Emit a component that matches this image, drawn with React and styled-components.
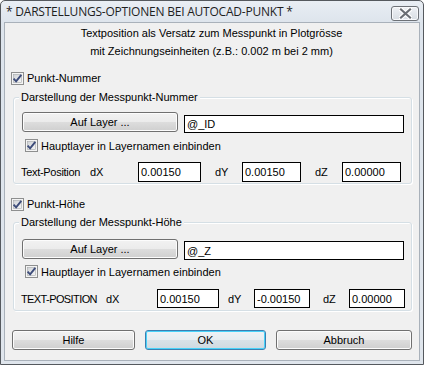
import styled, { createGlobalStyle } from 'styled-components'

const Global = createGlobalStyle`
  html, body { margin: 0; padding: 0; background: #ffffff; }
  * { box-sizing: border-box; }
`

const CheckBox = ({ checked }) => (
    <svg width="13" height="13" viewBox="0 0 13 13">
        <defs>
            <linearGradient id="cbfill" x1="0" y1="0" x2="1" y2="1">
                <stop offset="0" stopColor="#cfd2d6" />
                <stop offset="1" stopColor="#f6f6f6" />
            </linearGradient>
        </defs>
        <rect x="0.5" y="0.5" width="12" height="12" fill="#f4f4f4" stroke="#8e8f8f" />
        <rect x="2.5" y="2.5" width="8" height="8" fill="url(#cbfill)" stroke="#a5a8ab" strokeWidth="0.6" />
        {checked && <path d="M2.6 6.6 L5.1 9.3 L10.3 2.8" fill="none" stroke="#3d4c7a" strokeWidth="1.9" />}
    </svg>
)

const CloseGlyph = () => (
    <svg width="13" height="11" viewBox="0 0 13 11">
        <path d="M2 1.5 L11 9.5 M11 1.5 L2 9.5" stroke="#ffffff" strokeWidth="4.4" strokeLinecap="square" />
        <path d="M2 1.5 L11 9.5 M11 1.5 L2 9.5" stroke="#6b6f74" strokeWidth="2.2" strokeLinecap="square" />
    </svg>
)

const App = () => {
    return <Window>
        <Global />
        <TitleBar>
            <Title>* DARSTELLUNGS-OPTIONEN BEI AUTOCAD-PUNKT *</Title>
            <CloseButton><CloseGlyph /></CloseButton>
        </TitleBar>
        <Client>
            <Intro>
                <div>Textposition als Versatz zum Messpunkt in Plotgrösse</div>
                <div>mit Zeichnungseinheiten (z.B.: 0.002 m bei 2 mm)</div>
            </Intro>

            <Check $top={10}><CheckBox checked />Punkt-Nummer</Check>
            <Group $top={11} $padTop={14} $padBottom={1}>
                <Legend>Darstellung der Messpunkt-Nummer</Legend>
                <LayerRow>
                    <Button $w={156}>Auf Layer ...</Button>
                    <Input $w={220} $h={18} $top={3}>@_ID</Input>
                </LayerRow>
                <SubCheck $top={6}><CheckBox checked />Hauptlayer in Layernamen einbinden</SubCheck>
                <PosRow $top={10}>
                    <Caption $w={69} $tight={-0.3}>Text-Position</Caption>
                    <Axis $w={48}>dX</Axis>
                    <Input $w={63} $h={20}>0.00150</Input>
                    <Axis $w={41} $pad={14}>dY</Axis>
                    <Input $w={59} $h={20}>0.00150</Input>
                    <Axis $w={41} $pad={14}>dZ</Axis>
                    <Input $w={59} $h={20}>0.00000</Input>
                </PosRow>
            </Group>

            <Check $top={12}><CheckBox checked />Punkt-Höhe</Check>
            <Group $top={10} $padTop={16} $padBottom={2}>
                <Legend>Darstellung der Messpunkt-Höhe</Legend>
                <LayerRow>
                    <Button $w={156}>Auf Layer ...</Button>
                    <Input $w={220} $h={19} $top={2}>@_Z</Input>
                </LayerRow>
                <SubCheck $top={5}><CheckBox checked />Hauptlayer in Layernamen einbinden</SubCheck>
                <PosRow $top={11}>
                    <Caption $w={85} $tight={-0.6}>TEXT-POSITION</Caption>
                    <Axis $w={51}>dX</Axis>
                    <Input $w={62} $h={19}>0.00150</Input>
                    <Axis $w={35} $pad={9}>dY</Axis>
                    <Input $w={56} $h={19}>-0.00150</Input>
                    <Axis $w={39} $pad={13}>dZ</Axis>
                    <Input $w={56} $h={19}>0.00000</Input>
                </PosRow>
            </Group>

            <Footer>
                <Button $w={123}>Hilfe</Button>
                <Button $w={121} $default>OK</Button>
                <Button $w={136}>Abbruch</Button>
            </Footer>
        </Client>
    </Window>
}
export default App


const Window = styled.div`
    width: 424px;
    height: 365px;
    display: flex;
    flex-direction: column;
    border: 1px solid #55595e;
    border-radius: 5px 5px 0 0;
    background: linear-gradient(#e9eef4, #dde4ec 22px, #dfe5ec);
    padding: 0 3px 3px 3px;
    font-family: "Liberation Sans", Arial, sans-serif;
    font-size: 11px;
    color: #000;
`

const TitleBar = styled.div`
    height: 21px;
    display: flex;
    align-items: center;
    justify-content: space-between;
    padding: 0 1px 0 2px;
`

const Title = styled.div`
    font-family: "Open Sans", "Noto Sans", sans-serif;
    font-size: 12px;
    color: #1e1e1e;
    letter-spacing: -0.22px;
`

const CloseButton = styled.div`
    width: 28px;
    height: 15px;
    margin-top: 3px;
    border: 1px solid #6d7177;
    border-radius: 3px;
    background: linear-gradient(#eef1f5, #d8dde3);
    box-shadow: inset 0 0 0 1px #f8f9fb;
    display: flex;
    align-items: center;
    justify-content: center;
`

const Client = styled.div`
    flex: 1;
    display: flex;
    flex-direction: column;
    background: #f0f0f0;
    border: 1px solid #a9b1ba;
    padding: 0 7px 0 6px;
`

const Intro = styled.div`
    margin-top: 1px;
    text-align: center;
    line-height: 18px;
`

const Check = styled.label`
    display: flex;
    align-items: center;
    gap: 3px;
    height: 16px;
    margin-top: ${p => p.$top}px;
    svg { flex: none; }
`

const SubCheck = styled(Check)`
    height: 13px;
    margin-left: 3px;
`

const Group = styled.div`
    position: relative;
    margin: ${p => p.$top}px 0 0 2px;
    border: 1px solid #d5dfe5;
    border-radius: 3px;
    box-shadow: inset 1px 1px 0 #ffffff, 1px 1px 0 #ffffff;
    padding: ${p => p.$padTop}px 6px ${p => p.$padBottom}px 8px;
    display: flex;
    flex-direction: column;
`

const Legend = styled.span`
    position: absolute;
    top: -8px;
    left: 5px;
    padding: 0 2px;
    line-height: 14px;
    background: #f0f0f0;
`

const LayerRow = styled.div`
    display: flex;
    align-items: flex-start;
    gap: 6px;
`

const PosRow = styled.div`
    display: flex;
    align-items: center;
    margin-top: ${p => p.$top}px;
`

const Caption = styled.span`
    flex: none;
    width: ${p => p.$w}px;
    margin-left: -1px;
    white-space: nowrap;
    letter-spacing: ${p => p.$tight}px;
`

const Axis = styled.span`
    flex: none;
    width: ${p => p.$w}px;
    padding-left: ${p => p.$pad || 0}px;
`

const Input = styled.div`
    flex: none;
    width: ${p => p.$w}px;
    height: ${p => p.$h}px;
    margin-top: ${p => p.$top || 0}px;
    border: 1px solid #000;
    background: #fff;
    padding: 0 2px;
    display: flex;
    align-items: center;
    white-space: nowrap;
    overflow: hidden;
`

const Button = styled.div`
    width: ${p => p.$w}px;
    height: 20px;
    flex: none;
    display: flex;
    align-items: center;
    justify-content: center;
    border: 1px solid ${p => p.$default ? '#3c7fb1' : '#707070'};
    border-radius: 3px;
    background: ${p => p.$default
        ? 'linear-gradient(#eef3f6 0%, #e6edf1 50%, #d9e2e8 50%, #cfd9e0 100%)'
        : 'linear-gradient(#f2f2f2 0%, #ebebeb 50%, #dddddd 50%, #cfcfcf 100%)'};
    box-shadow: inset 0 0 0 1px ${p => p.$default ? '#48d2f9' : '#fcfcfc'};
`

const Footer = styled.div`
    display: flex;
    justify-content: space-between;
    margin: 19px 0 0 1px;
`
